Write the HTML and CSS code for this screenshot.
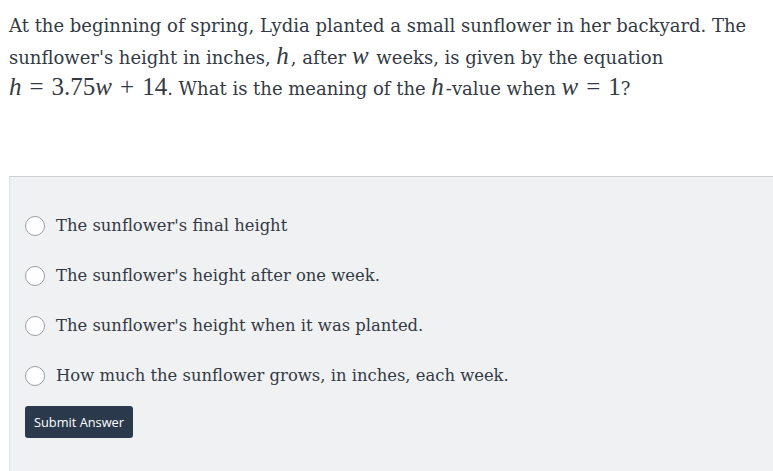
FILE: index.html
```html
<!DOCTYPE html>
<html>
<head>
<meta charset="utf-8">
<link rel="stylesheet" href="styles.css">
</head>
<body>
<div class="page">
  <p class="question">At the beginning of spring, Lydia planted a small sunflower in her backyard. The sunflower's height in inches, <span class="math solo"><span class="mi">h</span></span>, after <span class="math solo"><span class="mi">w</span></span> weeks, is given by the equation <span class="math"><span class="mi">h</span><span class="mo">=</span>3.75<span class="mi">w</span><span class="mo">+</span>14</span>. What is the meaning of the <span class="math solo"><span class="mi">h</span></span>-value when <span class="math"><span class="mi">w</span><span class="mo">=</span>1</span>?</p>
  <div class="answers">
    <div class="choices">
      <label class="choice"><span class="radio"></span><span class="choice-text">The sunflower's final height</span></label>
      <label class="choice"><span class="radio"></span><span class="choice-text">The sunflower's height after one week.</span></label>
      <label class="choice"><span class="radio"></span><span class="choice-text">The sunflower's height when it was planted.</span></label>
      <label class="choice"><span class="radio"></span><span class="choice-text">How much the sunflower grows, in inches, each week.</span></label>
    </div>
    <button class="submit">Submit Answer</button>
  </div>
</div>
</body>
</html>
```
FILE: styles.css
```css
html, body {
  margin: 0;
  padding: 0;
  background: #ffffff;
}
.page {
  padding: 0 0 0 9px;
  width: 764px;
  overflow: hidden;
}
.question {
  margin: 0;
  padding-top: 10px;
  font-family: "DejaVu Serif", serif;
  font-size: 18px;
  line-height: 31.5px;
  color: #333a44;
  width: 760px;
}
.mi {
  font-style: italic;
}
.math {
  white-space: nowrap;
  font-family: "Liberation Serif", serif;
  font-size: 25px;
  line-height: 1;
}
.solo {
  padding-right: 2px;
}
.mo {
  padding: 0 8px;
}
.answers {
  margin-top: 71px;
  background: #f0f1f3;
  border-top: 1px solid #cfd0d2;
  border-left: 1px solid #dfe0e2;
  height: 300px;
  padding: 37px 0 0 15px;
  box-sizing: border-box;
}
.choices {
  display: flex;
  flex-direction: column;
  gap: 26px;
}
.choice {
  display: flex;
  align-items: center;
  gap: 11px;
  height: 24px;
}
.radio {
  width: 20px;
  height: 20px;
  box-sizing: border-box;
  border: 1px solid #9a9da2;
  border-radius: 50%;
  background: #ffffff;
  flex: none;
}
.choice-text {
  font-family: "DejaVu Serif", serif;
  font-size: 16.4px;
  color: #333a44;
}
.submit {
  margin-top: 18px;
  background: #2a3a4c;
  color: #ffffff;
  border: none;
  border-radius: 3px;
  font-family: "Open Sans", sans-serif;
  font-size: 12.8px;
  height: 32px;
  padding: 0 9px;
}
```
